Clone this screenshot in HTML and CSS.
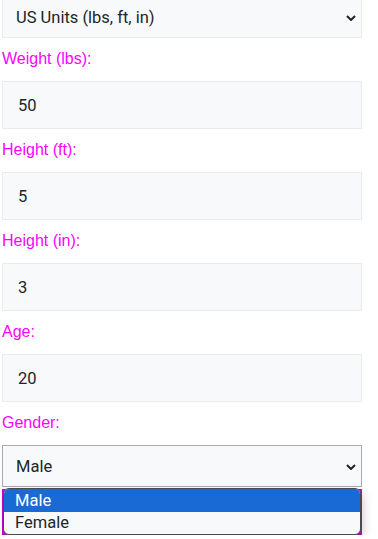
FILE: index.html
```html
<!DOCTYPE html>
<html>
<head>
  <title>BMI Calculator</title>
  <link rel="stylesheet" href="styles.css">
</head>
<body>
  <div class="form">
    <div class="select">
      <span>US Units (lbs, ft, in)</span>
      <svg class="chevron" width="10" height="6" viewBox="0 0 10 6"><path d="M1 1l4 4 4-4" fill="none" stroke="#222" stroke-width="2"/></svg>
    </div>

    <label for="weight">Weight (lbs):</label>
    <input type="text" id="weight" class="field" value="50">

    <label for="feet">Height (ft):</label>
    <input type="text" id="feet" class="field" value="5">

    <label for="inches">Height (in):</label>
    <input type="text" id="inches" class="field" value="3">

    <label for="age">Age:</label>
    <input type="text" id="age" class="field" value="20">

    <label>Gender:</label>
    <div class="gender">
      <div class="select active">
        <span>Male</span>
        <svg class="chevron" width="10" height="6" viewBox="0 0 10 6"><path d="M1 1l4 4 4-4" fill="none" stroke="#222" stroke-width="2"/></svg>
      </div>
      <ul class="options">
        <li class="selected">Male</li>
        <li>Female</li>
      </ul>
    </div>

    <button class="submit">Calculate BMI</button>
  </div>
</body>
</html>
```

FILE: styles.css
```css
body {
  margin: 0;
  overflow: hidden;
  background: #fff;
}

.form {
  width: 360px;
  margin: -4px 0 0 2px;
  font-family: "Segoe UI", Roboto, "Liberation Sans", sans-serif;
  font-size: 16.5px;
  color: #212529;
}

.select {
  box-sizing: border-box;
  height: 42px;
  display: flex;
  align-items: center;
  justify-content: space-between;
  padding: 0 5px 0 13px;
  background: #f8f9fa;
  border: 1px solid #e9ecef;
}

.select.active {
  border-color: #a9a9b3;
}

.chevron {
  margin-top: 1px;
}

label {
  display: block;
  margin: 12px 0 13px;
  font-family: "Liberation Sans", Arial, sans-serif;
  font-size: 16px;
  line-height: 18px;
  color: #f0f;
}

.field {
  display: block;
  box-sizing: border-box;
  width: 100%;
  height: 48px;
  margin: 0;
  padding: 0 15px;
  font: inherit;
  color: #212529;
  background: #f8f9fa;
  border: 1px solid #e9ecef;
  outline: none;
}

.gender {
  position: relative;
}

.options {
  position: absolute;
  top: 43px;
  left: 1px;
  right: 1px;
  z-index: 2;
  margin: 0;
  padding: 0;
  list-style: none;
  background: #f8f9fa;
  border: 1px solid #4a4a52;
  border-radius: 6px;
  overflow: hidden;
  box-shadow: 3px 4px 10px rgba(0, 0, 0, 0.18);
}

.options li {
  height: 22px;
  line-height: 22px;
  padding-left: 11px;
}

.options li.selected {
  height: 23px;
  line-height: 24px;
  background: #1a6ad6;
  color: #fff;
}

.submit {
  display: block;
  width: 100%;
  height: 46px;
  margin-top: 2px;
  font: inherit;
  color: #fff;
  background: #c406c8;
  border: none;
}
```
